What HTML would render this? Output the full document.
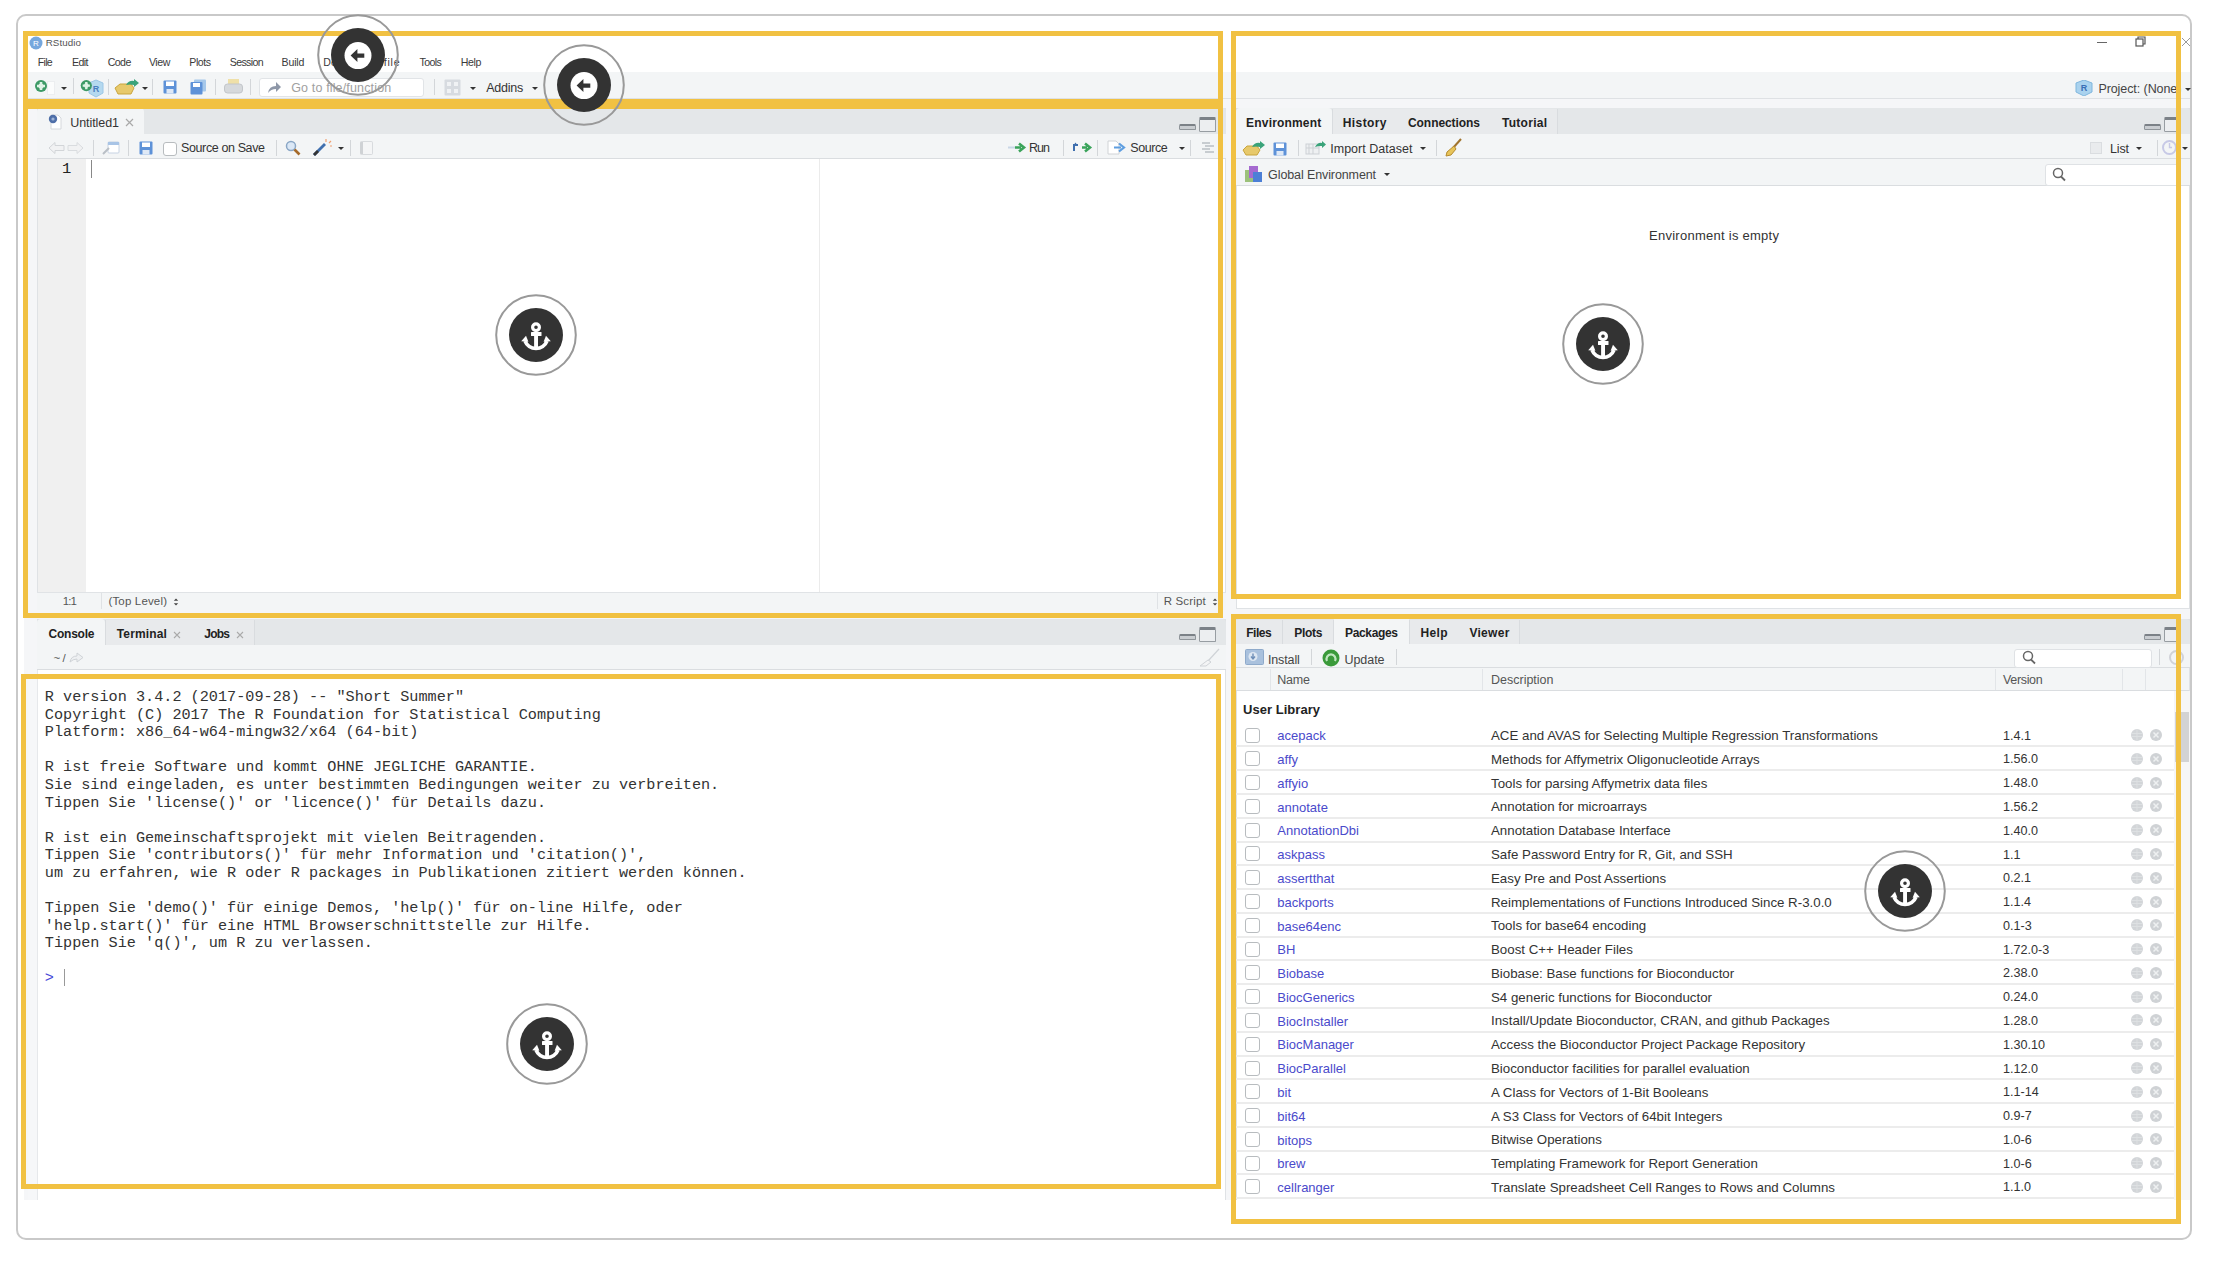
<!DOCTYPE html>
<html><head><meta charset="utf-8">
<style>
html,body{margin:0;padding:0;background:#fff;}
body{width:2218px;height:1262px;position:relative;overflow:hidden;font-family:"Liberation Sans",sans-serif;color:#333;}
.a{position:absolute;}
.t{position:absolute;white-space:pre;line-height:1;}
.y{position:absolute;border:5px solid #f1c142;box-sizing:border-box;}
</style></head><body>
<div class="a" style="left:16px;top:14px;width:2176px;height:1226px;border:2px solid #c9c9c9;border-radius:10px;box-sizing:border-box;"></div>
<svg class="a" style="left:29px;top:36px" width="14" height="14" viewBox="0 0 14 14"><circle cx="7" cy="7" r="6.5" fill="#75a7dd"/><text x="7" y="10" font-size="8" fill="#fff" text-anchor="middle" font-family="Liberation Sans">R</text></svg>
<div class="a" style="left:2097px;top:42px;width:10px;height:1px;background:#666;"></div>
<svg class="a" style="left:2135px;top:36px" width="12" height="11" viewBox="0 0 12 11"><rect x="1" y="3" width="7" height="7" fill="none" stroke="#555" stroke-width="1.2"/><path d="M3 3 V1 H10 V8 H8" fill="none" stroke="#555" stroke-width="1.2"/></svg>
<svg class="a" style="left:2181px;top:37px" width="10" height="10" viewBox="0 0 10 10"><path d="M1 1 L9 9 M9 1 L1 9" stroke="#999" stroke-width="1"/></svg>
<div class="a" style="left:24px;top:72px;width:2166px;height:27px;background:#f3f5f6;border-bottom:1px solid #dee1e4;box-sizing:border-box;"></div>
<div class="a" style="left:24px;top:99px;width:2166px;height:1101px;background:#f5f6f8;"></div>
<div class="a" style="left:47px;top:81px;width:8px;height:14px;background:#fbfcfc;border:1px solid #eceef0;box-sizing:border-box;"></div>
<svg class="a" style="left:33.6px;top:78.6px" width="14" height="14" viewBox="0 0 14 14"><circle cx="7" cy="7" r="6" fill="#3d9a66"/><path d="M7 3 V11 M3 7 H11" stroke="#dff3e6" stroke-width="2.6"/><circle cx="7" cy="7" r="2.6" fill="#dff3e6"/></svg>
<div class="a" style="left:61px;top:87px;width:0;height:0;border-left:3px solid transparent;border-right:3px solid transparent;border-top:3px solid #333;"></div>
<div class="a" style="left:73px;top:78px;width:1px;height:16px;background:#d3d6d9;"></div>
<svg class="a" style="left:80px;top:78px" width="24" height="20" viewBox="0 0 24 20"><path d="M9 5 L16 2 L23 5 V15 L16 19 L9 15 Z" fill="#b5d9ef" stroke="#9cc7e6"/><text x="16" y="14" font-size="9" fill="#4a7fc0" text-anchor="middle" font-family="Liberation Sans" font-weight="bold">R</text><circle cx="6.3" cy="7.6" r="5.6" fill="#3d9a66"/><path d="M6.3 4 V11.2 M2.7 7.6 H9.9" stroke="#dff3e6" stroke-width="2.4"/><circle cx="6.3" cy="7.6" r="2.3" fill="#dff3e6"/></svg>
<div class="a" style="left:108px;top:79px;width:1px;height:16px;background:#d3d6d9;"></div>
<svg class="a" style="left:114px;top:79px" width="26" height="16" viewBox="0 0 26 16"><path d="M1 9 L6 5 H17 L20 9 L17 15 H4 Z" fill="#e7c96b" stroke="#c9a53e"/><path d="M12 6 Q15 1 20 2 V0 L25 4 L20 8 V6 Q16 5 12 6Z" fill="#3aa37a"/></svg>
<div class="a" style="left:142px;top:87px;width:0;height:0;border-left:3px solid transparent;border-right:3px solid transparent;border-top:3px solid #333;"></div>
<div class="a" style="left:152px;top:79px;width:1px;height:16px;background:#d3d6d9;"></div>
<svg class="a" style="left:163px;top:80px" width="14" height="14" viewBox="0 0 14 14"><rect x="0.5" y="0.5" width="13" height="13" rx="1" fill="#5e92d8"/><rect x="3" y="1.5" width="8" height="4.5" fill="#fff"/><rect x="3.5" y="9" width="7" height="4.5" fill="#dfe9f6"/></svg>
<svg class="a" style="left:190px;top:79px" width="17" height="16" viewBox="0 0 17 16"><rect x="4" y="0.5" width="12" height="12" rx="1" fill="#a6c8ea"/><rect x="0.5" y="3" width="12" height="12.5" rx="1" fill="#5e92d8"/><rect x="3" y="4" width="7" height="4" fill="#fff"/></svg>
<div class="a" style="left:215px;top:79px;width:1px;height:16px;background:#d3d6d9;"></div>
<svg class="a" style="left:224px;top:79px" width="19" height="16" viewBox="0 0 19 16"><rect x="4" y="0" width="11" height="6" fill="#efe0a8"/><rect x="0.5" y="5" width="18" height="9" rx="3" fill="#d6d9dc" stroke="#c2c6ca"/></svg>
<div class="a" style="left:250px;top:79px;width:1px;height:16px;background:#d3d6d9;"></div>
<div class="a" style="left:259px;top:78px;width:165px;height:19px;background:#fff;border:1px solid #e1e4e7;border-radius:3px;box-sizing:border-box;"></div>
<svg class="a" style="left:267px;top:81px" width="15" height="13" viewBox="0 0 15 13"><path d="M1 12 Q2 5 9 5 V1 L14 6 L9 11 V8 Q4 8 1 12Z" fill="#8e97a8"/></svg>
<div class="a" style="left:434px;top:79px;width:1px;height:16px;background:#d3d6d9;"></div>
<svg class="a" style="left:444px;top:79px" width="17" height="17" viewBox="0 0 17 17"><rect x="0.5" y="0.5" width="16" height="16" rx="1" fill="#d7dbe0"/><rect x="3" y="3" width="4" height="4" fill="#f0f2f4"/><rect x="10" y="3" width="4" height="4" fill="#f0f2f4"/><rect x="3" y="10" width="4" height="4" fill="#f0f2f4"/><rect x="10" y="10" width="4" height="4" fill="#f0f2f4"/></svg>
<div class="a" style="left:470px;top:87px;width:0;height:0;border-left:3px solid transparent;border-right:3px solid transparent;border-top:3px solid #333;"></div>
<div class="a" style="left:532px;top:87px;width:0;height:0;border-left:3px solid transparent;border-right:3px solid transparent;border-top:3px solid #333;"></div>
<svg class="a" style="left:2075px;top:80px" width="18" height="16" viewBox="0 0 18 16"><path d="M9 0 L17 3 V12 L9 16 L1 12 V3 Z" fill="#a9d2ee" stroke="#7fb6dd"/><text x="9" y="11" font-size="9" fill="#3a6fb5" text-anchor="middle" font-family="Liberation Sans" font-weight="bold">R</text></svg>
<div class="a" style="left:2185px;top:88px;width:0;height:0;border-left:3px solid transparent;border-right:3px solid transparent;border-top:3px solid #333;"></div>
<div class="a" style="left:37px;top:108px;width:1189px;height:502px;background:#fff;border:1px solid #dfe2e5;box-sizing:border-box;"></div>
<div class="a" style="left:37px;top:108px;width:1189px;height:26px;background:#e4e7e9;border-radius:4px 4px 0 0;"></div>
<div class="a" style="left:37px;top:108px;width:107px;height:26px;background:#f3f5f6;border-radius:4px 4px 0 0;"></div>
<svg class="a" style="left:47px;top:113px" width="16" height="17" viewBox="0 0 16 17"><path d="M4 2 H11 L14 5 V16 H4 Z" fill="#fff" stroke="#d5d8db"/><circle cx="6" cy="6" r="4.2" fill="#4f6fa8"/><circle cx="6" cy="6" r="1.6" fill="#9fb5d8"/></svg>
<svg class="a" style="left:125px;top:118px" width="9" height="9" viewBox="0 0 9 9"><path d="M1 1 L8 8 M8 1 L1 8" stroke="#a9a9a9" stroke-width="1.2"/></svg>
<div class="a" style="left:1179px;top:124px;width:17px;height:6px;background:#c9cdd1;border:1px solid #8f959a;border-top:2px solid #7b8187;box-sizing:border-box;border-radius:1.5px;"></div>
<div class="a" style="left:1199px;top:117px;width:17px;height:15px;background:#eceef0;border:1px solid #979da2;border-top:3px solid #7b8187;box-sizing:border-box;border-radius:1.5px;"></div>
<div class="a" style="left:37px;top:134px;width:1189px;height:25px;background:#f3f5f6;border-bottom:1px solid #dadde0;box-sizing:border-box;"></div>
<svg class="a" style="left:48px;top:141px" width="36" height="14" viewBox="0 0 36 14"><path d="M1 7 L7 1.5 V4.5 H16 V9.5 H7 V12.5 Z" fill="#f1f2f3" stroke="#d2d5d8"/><path d="M35 7 L29 1.5 V4.5 H20 V9.5 H29 V12.5 Z" fill="#f1f2f3" stroke="#d9dcdf"/></svg>
<div class="a" style="left:93px;top:140px;width:1px;height:16px;background:#d3d6d9;"></div>
<svg class="a" style="left:102px;top:140px" width="18" height="15" viewBox="0 0 18 15"><rect x="6" y="2" width="11" height="11" rx="1" fill="#fff" stroke="#c7d3e3"/><rect x="6" y="2" width="11" height="3" fill="#a8c4e6"/><path d="M1 14 L7 8" stroke="#b9bfc6" stroke-width="2"/></svg>
<div class="a" style="left:128px;top:140px;width:1px;height:16px;background:#d3d6d9;"></div>
<svg class="a" style="left:139px;top:141px" width="14" height="14" viewBox="0 0 14 14"><rect x="0.5" y="0.5" width="13" height="13" rx="1" fill="#5e92d8"/><rect x="3" y="1.5" width="8" height="4.5" fill="#fff"/><rect x="3.5" y="9" width="7" height="4.5" fill="#dfe9f6"/></svg>
<div class="a" style="left:163px;top:142px;width:14px;height:14px;background:#fff;border:1px solid #b8bcbf;box-sizing:border-box;border-radius:3px;"></div>
<div class="a" style="left:276px;top:140px;width:1px;height:16px;background:#d3d6d9;"></div>
<svg class="a" style="left:285px;top:140px" width="16" height="16" viewBox="0 0 16 16"><circle cx="6" cy="6" r="4.5" fill="#dbe8f6" stroke="#8aa7c6" stroke-width="1.5"/><path d="M9.5 9.5 L14.5 14.5" stroke="#a56a2a" stroke-width="2.6"/></svg>
<svg class="a" style="left:312px;top:138px" width="20" height="19" viewBox="0 0 20 19"><path d="M2 17 L13 6" stroke="#3f6fae" stroke-width="2.8"/><path d="M2 17 L6 13" stroke="#333" stroke-width="2.8"/><path d="M14 1 V4 M17 5 L19 3 M18 8 H20" stroke="#f0a070" stroke-width="1.2"/></svg>
<div class="a" style="left:338px;top:147px;width:0;height:0;border-left:3px solid transparent;border-right:3px solid transparent;border-top:3px solid #333;"></div>
<div class="a" style="left:350px;top:140px;width:1px;height:16px;background:#d3d6d9;"></div>
<div class="a" style="left:360px;top:141px;width:13px;height:14px;background:#f4f5f6;border:1px solid #d8dbde;border-left:3px solid #cfd2d5;box-sizing:border-box;border-radius:2px;"></div>
<svg class="a" style="left:1007px;top:142px" width="20" height="11" viewBox="0 0 20 11"><path d="M1 5.5 H8" stroke="#c9d6e6" stroke-width="2"/><path d="M8 5.5 H14 M12 1.5 L17 5.5 L12 9.5" stroke="#3aa35a" stroke-width="2.6" fill="none"/></svg>
<div class="a" style="left:1063px;top:140px;width:1px;height:16px;background:#d3d6d9;"></div>
<svg class="a" style="left:1072px;top:142px" width="21" height="11" viewBox="0 0 21 11"><path d="M2 9 V3 H6" stroke="#3f6fae" stroke-width="2" fill="none"/><path d="M1 4 L3.5 0.5 L6 4" fill="#3f6fae"/><path d="M10 5.5 H15 M13 1.5 L18 5.5 L13 9.5" stroke="#3aa35a" stroke-width="2.6" fill="none"/></svg>
<div class="a" style="left:1097px;top:140px;width:1px;height:16px;background:#d3d6d9;"></div>
<svg class="a" style="left:1107px;top:140px" width="20" height="15" viewBox="0 0 20 15"><path d="M1 1 H9 L12 4 V14 H1 Z" fill="#fff" stroke="#d0d3d6"/><path d="M7 7.5 H14 M12 3.5 L17 7.5 L12 11.5" stroke="#5e9ee0" stroke-width="2.2" fill="none"/></svg>
<div class="a" style="left:1179px;top:147px;width:0;height:0;border-left:3px solid transparent;border-right:3px solid transparent;border-top:3px solid #333;"></div>
<div class="a" style="left:1190px;top:140px;width:1px;height:16px;background:#d3d6d9;"></div>
<svg class="a" style="left:1201px;top:141px" width="14" height="13" viewBox="0 0 14 13"><path d="M1 2 H9 M4 5 H13 M1 8 H9 M4 11 H13" stroke="#b9bec3" stroke-width="1.6"/></svg>
<div class="a" style="left:38px;top:159px;width:48px;height:433px;background:#f0f0f0;"></div>
<div class="a" style="left:819px;top:159px;width:1px;height:433px;background:#ebebeb;"></div>
<div class="a" style="left:91px;top:160px;width:1px;height:18px;background:#888;"></div>
<div class="a" style="left:37px;top:592px;width:1189px;height:18px;background:#f3f5f6;border-top:1px solid #e0e3e6;box-sizing:border-box;"></div>
<div class="a" style="left:101px;top:593px;width:1px;height:16px;background:#dfe2e5;"></div>
<div class="a" style="left:1157px;top:593px;width:1px;height:16px;background:#dfe2e5;"></div>
<svg class="a" style="left:173px;top:597px" width="6" height="10" viewBox="0 0 6 10"><path d="M0.8 3.8 L3 1.5 L5.2 3.8 Z M0.8 6.2 L3 8.5 L5.2 6.2 Z" fill="#444"/></svg>
<svg class="a" style="left:1212px;top:597px" width="6" height="10" viewBox="0 0 6 10"><path d="M0.8 3.8 L3 1.5 L5.2 3.8 Z M0.8 6.2 L3 8.5 L5.2 6.2 Z" fill="#444"/></svg>
<div class="a" style="left:37px;top:619px;width:1189px;height:581px;background:#fff;border:1px solid #dfe2e5;border-bottom:none;box-sizing:border-box;"></div>
<div class="a" style="left:37px;top:619px;width:1189px;height:26px;background:#e4e7e9;border-radius:4px 4px 0 0;"></div>
<div class="a" style="left:37px;top:619px;width:68px;height:26px;background:#f3f5f6;border-radius:4px 4px 0 0;"></div>
<div class="a" style="left:105px;top:620px;width:87px;height:25px;background:#e8eaec;border-left:1px solid #d9dcdf;border-right:1px solid #d9dcdf;box-sizing:border-box;"></div>
<div class="a" style="left:191px;top:620px;width:64px;height:25px;background:#e8eaec;border-right:1px solid #d9dcdf;box-sizing:border-box;"></div>
<svg class="a" style="left:173px;top:631px" width="8" height="8" viewBox="0 0 8 8"><path d="M1 1 L7 7 M7 1 L1 7" stroke="#aaa" stroke-width="1.1"/></svg>
<svg class="a" style="left:236px;top:631px" width="8" height="8" viewBox="0 0 8 8"><path d="M1 1 L7 7 M7 1 L1 7" stroke="#aaa" stroke-width="1.1"/></svg>
<div class="a" style="left:1179px;top:634px;width:17px;height:6px;background:#c9cdd1;border:1px solid #8f959a;border-top:2px solid #7b8187;box-sizing:border-box;border-radius:1.5px;"></div>
<div class="a" style="left:1199px;top:627px;width:17px;height:15px;background:#eceef0;border:1px solid #979da2;border-top:3px solid #7b8187;box-sizing:border-box;border-radius:1.5px;"></div>
<div class="a" style="left:37px;top:645px;width:1189px;height:25px;background:#f3f5f6;border-bottom:1px solid #dadde0;box-sizing:border-box;"></div>
<svg class="a" style="left:69px;top:652px" width="15" height="11" viewBox="0 0 15 11"><path d="M1 10 Q2 4 8 4 V1 L14 5.5 L8 10 V7 Q4 7 1 10Z" fill="#eef0f2" stroke="#cfd3d7"/></svg>
<svg class="a" style="left:1198px;top:648px" width="22" height="20" viewBox="0 0 22 20"><path d="M21 1 L10 13" stroke="#cfd3d7" stroke-width="1.2"/><path d="M10 12 L2 18 H8 L13 14 Z" fill="#f3f4f5" stroke="#cfd3d7"/></svg>
<div class="a" style="left:28px;top:670px;width:10px;height:530px;background:#f6f7f9;border-right:1px solid #e6e8eb;box-sizing:border-box;"></div>
<div class="a" style="left:64px;top:969px;width:1px;height:17px;background:#999;"></div>
<div class="a" style="left:1236px;top:108px;width:954px;height:501px;background:#fff;border:1px solid #dfe2e5;box-sizing:border-box;"></div>
<div class="a" style="left:1236px;top:108px;width:954px;height:26px;background:#e4e7e9;border-radius:4px 4px 0 0;"></div>
<div class="a" style="left:1236px;top:108px;width:96px;height:26px;background:#f3f5f6;border-radius:4px 4px 0 0;"></div>
<div class="a" style="left:1332px;top:109px;width:66px;height:25px;background:#e8eaec;border-left:1px solid #d9dcdf;border-right:1px solid #d9dcdf;box-sizing:border-box;"></div>
<div class="a" style="left:1397px;top:109px;width:94px;height:25px;background:#e8eaec;border-right:1px solid #d9dcdf;box-sizing:border-box;"></div>
<div class="a" style="left:1490px;top:109px;width:68px;height:25px;background:#e8eaec;border-right:1px solid #d9dcdf;box-sizing:border-box;"></div>
<div class="a" style="left:2144px;top:124px;width:17px;height:6px;background:#c9cdd1;border:1px solid #8f959a;border-top:2px solid #7b8187;box-sizing:border-box;border-radius:1.5px;"></div>
<div class="a" style="left:2164px;top:117px;width:17px;height:15px;background:#eceef0;border:1px solid #979da2;border-top:3px solid #7b8187;box-sizing:border-box;border-radius:1.5px;"></div>
<div class="a" style="left:1236px;top:134px;width:954px;height:25px;background:#f3f5f6;border-bottom:1px solid #dadde0;box-sizing:border-box;"></div>
<svg class="a" style="left:1242px;top:141px" width="24" height="15" viewBox="0 0 24 15"><path d="M1 9 L5 5 H15 L18 9 L15 14 H4 Z" fill="#e7c96b" stroke="#c9a53e"/><path d="M10 6 Q13 1 18 2 V0 L23 4 L18 8 V6 Q14 5 10 6Z" fill="#3aa37a"/></svg>
<svg class="a" style="left:1273px;top:142px" width="14" height="14" viewBox="0 0 14 14"><rect x="0.5" y="0.5" width="13" height="13" rx="1" fill="#5e92d8"/><rect x="3" y="1.5" width="8" height="4.5" fill="#fff"/><rect x="3.5" y="9" width="7" height="4.5" fill="#dfe9f6"/></svg>
<div class="a" style="left:1298px;top:140px;width:1px;height:16px;background:#d3d6d9;"></div>
<svg class="a" style="left:1305px;top:141px" width="22" height="14" viewBox="0 0 22 14"><rect x="1" y="3" width="13" height="10" fill="#eef0f2" stroke="#cdd1d5"/><path d="M4 3 V13 M8 3 V13 M1 7 H14" stroke="#cdd1d5"/><path d="M10 6 Q13 1 17 2 V0 L21 3.5 L17 7 V5 Q14 4.5 10 6Z" fill="#3aa37a"/></svg>
<div class="a" style="left:1420px;top:147px;width:0;height:0;border-left:3px solid transparent;border-right:3px solid transparent;border-top:3px solid #333;"></div>
<div class="a" style="left:1436px;top:140px;width:1px;height:16px;background:#d3d6d9;"></div>
<svg class="a" style="left:1444px;top:138px" width="19" height="19" viewBox="0 0 19 19"><path d="M17 1 L9 10" stroke="#a0742e" stroke-width="2"/><path d="M10 8 L3 14 L2 18 L7 17 L12 11 Z" fill="#e7c45a" stroke="#b58a2e"/></svg>
<div class="a" style="left:2090px;top:142px;width:12px;height:12px;background:#e9ebed;border:1px solid #dadde0;box-sizing:border-box;"></div>
<div class="a" style="left:2136px;top:147px;width:0;height:0;border-left:3px solid transparent;border-right:3px solid transparent;border-top:3px solid #333;"></div>
<div class="a" style="left:2157px;top:140px;width:1px;height:16px;background:#d3d6d9;"></div>
<svg class="a" style="left:2161px;top:139px" width="17" height="17" viewBox="0 0 17 17"><circle cx="8.5" cy="8.5" r="6.5" fill="none" stroke="#c7c9e6" stroke-width="2"/><path d="M8.5 4 V8.5 H11" stroke="#c7c9e6" stroke-width="1.4" fill="none"/></svg>
<div class="a" style="left:2182px;top:147px;width:0;height:0;border-left:3px solid transparent;border-right:3px solid transparent;border-top:3px solid #333;"></div>
<div class="a" style="left:1236px;top:159px;width:954px;height:27px;background:#f3f5f6;border-bottom:1px solid #dadde0;box-sizing:border-box;"></div>
<svg class="a" style="left:1244px;top:165px" width="19" height="18" viewBox="0 0 19 18"><rect x="1" y="5" width="10" height="12" fill="#9cc17a"/><rect x="5" y="1" width="9" height="12" fill="#a56ad0"/><rect x="9" y="7" width="9" height="10" fill="#4c7fd6"/></svg>
<div class="a" style="left:1384px;top:173px;width:0;height:0;border-left:3px solid transparent;border-right:3px solid transparent;border-top:3px solid #333;"></div>
<div class="a" style="left:2045px;top:164px;width:136px;height:22px;background:#fff;border:1px solid #dfe2e5;border-radius:3px;box-sizing:border-box;"></div>
<svg class="a" style="left:2052px;top:167px" width="14" height="15" viewBox="0 0 14 15"><circle cx="6" cy="6" r="4.5" fill="none" stroke="#666" stroke-width="1.5"/><path d="M9 9.5 L13 13.5" stroke="#666" stroke-width="1.8"/></svg>
<div class="a" style="left:1236px;top:619px;width:954px;height:581px;background:#fff;border:1px solid #dfe2e5;border-bottom:none;box-sizing:border-box;"></div>
<div class="a" style="left:1236px;top:619px;width:954px;height:25px;background:#e4e7e9;border-radius:4px 4px 0 0;"></div>
<div class="a" style="left:1236px;top:620px;width:47px;height:24px;background:#e8eaec;border-right:1px solid #d9dcdf;box-sizing:border-box;"></div>
<div class="a" style="left:1283px;top:620px;width:51px;height:24px;background:#e8eaec;border-right:1px solid #d9dcdf;box-sizing:border-box;"></div>
<div class="a" style="left:1334px;top:619px;width:75px;height:25px;background:#f3f5f6;"></div>
<div class="a" style="left:1409px;top:620px;width:49px;height:24px;background:#e8eaec;border-left:1px solid #d9dcdf;border-right:1px solid #d9dcdf;box-sizing:border-box;"></div>
<div class="a" style="left:1457px;top:620px;width:63px;height:24px;background:#e8eaec;border-right:1px solid #d9dcdf;box-sizing:border-box;"></div>
<div class="a" style="left:2144px;top:634px;width:17px;height:6px;background:#c9cdd1;border:1px solid #8f959a;border-top:2px solid #7b8187;box-sizing:border-box;border-radius:1.5px;"></div>
<div class="a" style="left:2164px;top:627px;width:17px;height:15px;background:#eceef0;border:1px solid #979da2;border-top:3px solid #7b8187;box-sizing:border-box;border-radius:1.5px;"></div>
<div class="a" style="left:1236px;top:644px;width:954px;height:24px;background:#f3f5f6;border-bottom:1px solid #dadde0;box-sizing:border-box;"></div>
<svg class="a" style="left:1245px;top:649px" width="19" height="16" viewBox="0 0 19 16"><rect x="0.5" y="0.5" width="18" height="15" rx="1" fill="#a9c1dd" stroke="#8eaacb"/><circle cx="8" cy="7.5" r="4.5" fill="#dde7f2"/><path d="M8 4.5 V9.5 M6 7.5 L8 10 L10 7.5" stroke="#6f8fb8" stroke-width="1.4" fill="none"/></svg>
<div class="a" style="left:1311px;top:649px;width:1px;height:16px;background:#d3d6d9;"></div>
<svg class="a" style="left:1322px;top:649px" width="18" height="18" viewBox="0 0 18 18"><circle cx="9" cy="9" r="8.5" fill="#3a9a3a"/><path d="M5 12 A4.5 4.5 0 1 1 13 12" fill="none" stroke="#bfe6bf" stroke-width="2.2"/></svg>
<div class="a" style="left:1396px;top:649px;width:1px;height:16px;background:#d3d6d9;"></div>
<div class="a" style="left:2014px;top:649px;width:138px;height:19px;background:#fff;border:1px solid #dfe2e5;border-radius:3px;box-sizing:border-box;"></div>
<svg class="a" style="left:2022px;top:650px" width="14" height="15" viewBox="0 0 14 15"><circle cx="6" cy="6" r="4.5" fill="none" stroke="#666" stroke-width="1.5"/><path d="M9 9.5 L13 13.5" stroke="#666" stroke-width="1.8"/></svg>
<div class="a" style="left:2159px;top:649px;width:1px;height:16px;background:#d3d6d9;"></div>
<svg class="a" style="left:2168px;top:649px" width="17" height="17" viewBox="0 0 17 17"><circle cx="8.5" cy="8.5" r="6.5" fill="none" stroke="#d0d2d8" stroke-width="2"/></svg>
<div class="a" style="left:1236px;top:668px;width:953px;height:23px;background:#f3f5f6;border-bottom:1px solid #dadde0;box-sizing:border-box;"></div>
<div class="a" style="left:1270px;top:669px;width:1px;height:21px;background:#e2e5e8;"></div>
<div class="a" style="left:1482px;top:669px;width:1px;height:21px;background:#e2e5e8;"></div>
<div class="a" style="left:1995px;top:669px;width:1px;height:21px;background:#e2e5e8;"></div>
<div class="a" style="left:2122px;top:669px;width:1px;height:21px;background:#e2e5e8;"></div>
<div class="a" style="left:2145px;top:669px;width:1px;height:21px;background:#e2e5e8;"></div>
<div class="a" style="left:2174px;top:691px;width:16px;height:509px;background:#f6f6f6;"></div>
<div class="a" style="left:2175px;top:712px;width:14px;height:50px;background:#d3d3d3;"></div>
<div class="a" style="left:1236px;top:745px;width:938px;height:2px;background:#ececec;"></div>
<div class="a" style="left:1245px;top:728px;width:15px;height:15px;background:#fff;border:1px solid #b8bcbf;box-sizing:border-box;border-radius:3px;"></div>
<svg class="a" style="left:2130px;top:728px" width="14" height="14" viewBox="0 0 14 14"><circle cx="7" cy="7" r="6" fill="#d2d5d8"/><path d="M1.5 5.5 H12.5 M1.5 8.5 H12.5 M7 1 V13" stroke="#dfe2e4" stroke-width="0.8"/></svg>
<svg class="a" style="left:2149px;top:728px" width="14" height="14" viewBox="0 0 14 14"><circle cx="7" cy="7" r="6" fill="#cfd2d5"/><path d="M4.5 4.5 L9.5 9.5 M9.5 4.5 L4.5 9.5" stroke="#eef0f1" stroke-width="1.5"/></svg>
<div class="a" style="left:1236px;top:769px;width:938px;height:2px;background:#ececec;"></div>
<div class="a" style="left:1245px;top:751px;width:15px;height:15px;background:#fff;border:1px solid #b8bcbf;box-sizing:border-box;border-radius:3px;"></div>
<svg class="a" style="left:2130px;top:752px" width="14" height="14" viewBox="0 0 14 14"><circle cx="7" cy="7" r="6" fill="#d2d5d8"/><path d="M1.5 5.5 H12.5 M1.5 8.5 H12.5 M7 1 V13" stroke="#dfe2e4" stroke-width="0.8"/></svg>
<svg class="a" style="left:2149px;top:752px" width="14" height="14" viewBox="0 0 14 14"><circle cx="7" cy="7" r="6" fill="#cfd2d5"/><path d="M4.5 4.5 L9.5 9.5 M9.5 4.5 L4.5 9.5" stroke="#eef0f1" stroke-width="1.5"/></svg>
<div class="a" style="left:1236px;top:793px;width:938px;height:2px;background:#ececec;"></div>
<div class="a" style="left:1245px;top:775px;width:15px;height:15px;background:#fff;border:1px solid #b8bcbf;box-sizing:border-box;border-radius:3px;"></div>
<svg class="a" style="left:2130px;top:776px" width="14" height="14" viewBox="0 0 14 14"><circle cx="7" cy="7" r="6" fill="#d2d5d8"/><path d="M1.5 5.5 H12.5 M1.5 8.5 H12.5 M7 1 V13" stroke="#dfe2e4" stroke-width="0.8"/></svg>
<svg class="a" style="left:2149px;top:776px" width="14" height="14" viewBox="0 0 14 14"><circle cx="7" cy="7" r="6" fill="#cfd2d5"/><path d="M4.5 4.5 L9.5 9.5 M9.5 4.5 L4.5 9.5" stroke="#eef0f1" stroke-width="1.5"/></svg>
<div class="a" style="left:1236px;top:817px;width:938px;height:2px;background:#ececec;"></div>
<div class="a" style="left:1245px;top:799px;width:15px;height:15px;background:#fff;border:1px solid #b8bcbf;box-sizing:border-box;border-radius:3px;"></div>
<svg class="a" style="left:2130px;top:799px" width="14" height="14" viewBox="0 0 14 14"><circle cx="7" cy="7" r="6" fill="#d2d5d8"/><path d="M1.5 5.5 H12.5 M1.5 8.5 H12.5 M7 1 V13" stroke="#dfe2e4" stroke-width="0.8"/></svg>
<svg class="a" style="left:2149px;top:799px" width="14" height="14" viewBox="0 0 14 14"><circle cx="7" cy="7" r="6" fill="#cfd2d5"/><path d="M4.5 4.5 L9.5 9.5 M9.5 4.5 L4.5 9.5" stroke="#eef0f1" stroke-width="1.5"/></svg>
<div class="a" style="left:1236px;top:841px;width:938px;height:2px;background:#ececec;"></div>
<div class="a" style="left:1245px;top:823px;width:15px;height:15px;background:#fff;border:1px solid #b8bcbf;box-sizing:border-box;border-radius:3px;"></div>
<svg class="a" style="left:2130px;top:823px" width="14" height="14" viewBox="0 0 14 14"><circle cx="7" cy="7" r="6" fill="#d2d5d8"/><path d="M1.5 5.5 H12.5 M1.5 8.5 H12.5 M7 1 V13" stroke="#dfe2e4" stroke-width="0.8"/></svg>
<svg class="a" style="left:2149px;top:823px" width="14" height="14" viewBox="0 0 14 14"><circle cx="7" cy="7" r="6" fill="#cfd2d5"/><path d="M4.5 4.5 L9.5 9.5 M9.5 4.5 L4.5 9.5" stroke="#eef0f1" stroke-width="1.5"/></svg>
<div class="a" style="left:1236px;top:864px;width:938px;height:2px;background:#ececec;"></div>
<div class="a" style="left:1245px;top:846px;width:15px;height:15px;background:#fff;border:1px solid #b8bcbf;box-sizing:border-box;border-radius:3px;"></div>
<svg class="a" style="left:2130px;top:847px" width="14" height="14" viewBox="0 0 14 14"><circle cx="7" cy="7" r="6" fill="#d2d5d8"/><path d="M1.5 5.5 H12.5 M1.5 8.5 H12.5 M7 1 V13" stroke="#dfe2e4" stroke-width="0.8"/></svg>
<svg class="a" style="left:2149px;top:847px" width="14" height="14" viewBox="0 0 14 14"><circle cx="7" cy="7" r="6" fill="#cfd2d5"/><path d="M4.5 4.5 L9.5 9.5 M9.5 4.5 L4.5 9.5" stroke="#eef0f1" stroke-width="1.5"/></svg>
<div class="a" style="left:1236px;top:888px;width:938px;height:2px;background:#ececec;"></div>
<div class="a" style="left:1245px;top:870px;width:15px;height:15px;background:#fff;border:1px solid #b8bcbf;box-sizing:border-box;border-radius:3px;"></div>
<svg class="a" style="left:2130px;top:871px" width="14" height="14" viewBox="0 0 14 14"><circle cx="7" cy="7" r="6" fill="#d2d5d8"/><path d="M1.5 5.5 H12.5 M1.5 8.5 H12.5 M7 1 V13" stroke="#dfe2e4" stroke-width="0.8"/></svg>
<svg class="a" style="left:2149px;top:871px" width="14" height="14" viewBox="0 0 14 14"><circle cx="7" cy="7" r="6" fill="#cfd2d5"/><path d="M4.5 4.5 L9.5 9.5 M9.5 4.5 L4.5 9.5" stroke="#eef0f1" stroke-width="1.5"/></svg>
<div class="a" style="left:1236px;top:912px;width:938px;height:2px;background:#ececec;"></div>
<div class="a" style="left:1245px;top:894px;width:15px;height:15px;background:#fff;border:1px solid #b8bcbf;box-sizing:border-box;border-radius:3px;"></div>
<svg class="a" style="left:2130px;top:895px" width="14" height="14" viewBox="0 0 14 14"><circle cx="7" cy="7" r="6" fill="#d2d5d8"/><path d="M1.5 5.5 H12.5 M1.5 8.5 H12.5 M7 1 V13" stroke="#dfe2e4" stroke-width="0.8"/></svg>
<svg class="a" style="left:2149px;top:895px" width="14" height="14" viewBox="0 0 14 14"><circle cx="7" cy="7" r="6" fill="#cfd2d5"/><path d="M4.5 4.5 L9.5 9.5 M9.5 4.5 L4.5 9.5" stroke="#eef0f1" stroke-width="1.5"/></svg>
<div class="a" style="left:1236px;top:936px;width:938px;height:2px;background:#ececec;"></div>
<div class="a" style="left:1245px;top:918px;width:15px;height:15px;background:#fff;border:1px solid #b8bcbf;box-sizing:border-box;border-radius:3px;"></div>
<svg class="a" style="left:2130px;top:918px" width="14" height="14" viewBox="0 0 14 14"><circle cx="7" cy="7" r="6" fill="#d2d5d8"/><path d="M1.5 5.5 H12.5 M1.5 8.5 H12.5 M7 1 V13" stroke="#dfe2e4" stroke-width="0.8"/></svg>
<svg class="a" style="left:2149px;top:918px" width="14" height="14" viewBox="0 0 14 14"><circle cx="7" cy="7" r="6" fill="#cfd2d5"/><path d="M4.5 4.5 L9.5 9.5 M9.5 4.5 L4.5 9.5" stroke="#eef0f1" stroke-width="1.5"/></svg>
<div class="a" style="left:1236px;top:959px;width:938px;height:2px;background:#ececec;"></div>
<div class="a" style="left:1245px;top:942px;width:15px;height:15px;background:#fff;border:1px solid #b8bcbf;box-sizing:border-box;border-radius:3px;"></div>
<svg class="a" style="left:2130px;top:942px" width="14" height="14" viewBox="0 0 14 14"><circle cx="7" cy="7" r="6" fill="#d2d5d8"/><path d="M1.5 5.5 H12.5 M1.5 8.5 H12.5 M7 1 V13" stroke="#dfe2e4" stroke-width="0.8"/></svg>
<svg class="a" style="left:2149px;top:942px" width="14" height="14" viewBox="0 0 14 14"><circle cx="7" cy="7" r="6" fill="#cfd2d5"/><path d="M4.5 4.5 L9.5 9.5 M9.5 4.5 L4.5 9.5" stroke="#eef0f1" stroke-width="1.5"/></svg>
<div class="a" style="left:1236px;top:983px;width:938px;height:2px;background:#ececec;"></div>
<div class="a" style="left:1245px;top:965px;width:15px;height:15px;background:#fff;border:1px solid #b8bcbf;box-sizing:border-box;border-radius:3px;"></div>
<svg class="a" style="left:2130px;top:966px" width="14" height="14" viewBox="0 0 14 14"><circle cx="7" cy="7" r="6" fill="#d2d5d8"/><path d="M1.5 5.5 H12.5 M1.5 8.5 H12.5 M7 1 V13" stroke="#dfe2e4" stroke-width="0.8"/></svg>
<svg class="a" style="left:2149px;top:966px" width="14" height="14" viewBox="0 0 14 14"><circle cx="7" cy="7" r="6" fill="#cfd2d5"/><path d="M4.5 4.5 L9.5 9.5 M9.5 4.5 L4.5 9.5" stroke="#eef0f1" stroke-width="1.5"/></svg>
<div class="a" style="left:1236px;top:1007px;width:938px;height:2px;background:#ececec;"></div>
<div class="a" style="left:1245px;top:989px;width:15px;height:15px;background:#fff;border:1px solid #b8bcbf;box-sizing:border-box;border-radius:3px;"></div>
<svg class="a" style="left:2130px;top:990px" width="14" height="14" viewBox="0 0 14 14"><circle cx="7" cy="7" r="6" fill="#d2d5d8"/><path d="M1.5 5.5 H12.5 M1.5 8.5 H12.5 M7 1 V13" stroke="#dfe2e4" stroke-width="0.8"/></svg>
<svg class="a" style="left:2149px;top:990px" width="14" height="14" viewBox="0 0 14 14"><circle cx="7" cy="7" r="6" fill="#cfd2d5"/><path d="M4.5 4.5 L9.5 9.5 M9.5 4.5 L4.5 9.5" stroke="#eef0f1" stroke-width="1.5"/></svg>
<div class="a" style="left:1236px;top:1031px;width:938px;height:2px;background:#ececec;"></div>
<div class="a" style="left:1245px;top:1013px;width:15px;height:15px;background:#fff;border:1px solid #b8bcbf;box-sizing:border-box;border-radius:3px;"></div>
<svg class="a" style="left:2130px;top:1013px" width="14" height="14" viewBox="0 0 14 14"><circle cx="7" cy="7" r="6" fill="#d2d5d8"/><path d="M1.5 5.5 H12.5 M1.5 8.5 H12.5 M7 1 V13" stroke="#dfe2e4" stroke-width="0.8"/></svg>
<svg class="a" style="left:2149px;top:1013px" width="14" height="14" viewBox="0 0 14 14"><circle cx="7" cy="7" r="6" fill="#cfd2d5"/><path d="M4.5 4.5 L9.5 9.5 M9.5 4.5 L4.5 9.5" stroke="#eef0f1" stroke-width="1.5"/></svg>
<div class="a" style="left:1236px;top:1055px;width:938px;height:2px;background:#ececec;"></div>
<div class="a" style="left:1245px;top:1037px;width:15px;height:15px;background:#fff;border:1px solid #b8bcbf;box-sizing:border-box;border-radius:3px;"></div>
<svg class="a" style="left:2130px;top:1037px" width="14" height="14" viewBox="0 0 14 14"><circle cx="7" cy="7" r="6" fill="#d2d5d8"/><path d="M1.5 5.5 H12.5 M1.5 8.5 H12.5 M7 1 V13" stroke="#dfe2e4" stroke-width="0.8"/></svg>
<svg class="a" style="left:2149px;top:1037px" width="14" height="14" viewBox="0 0 14 14"><circle cx="7" cy="7" r="6" fill="#cfd2d5"/><path d="M4.5 4.5 L9.5 9.5 M9.5 4.5 L4.5 9.5" stroke="#eef0f1" stroke-width="1.5"/></svg>
<div class="a" style="left:1236px;top:1078px;width:938px;height:2px;background:#ececec;"></div>
<div class="a" style="left:1245px;top:1061px;width:15px;height:15px;background:#fff;border:1px solid #b8bcbf;box-sizing:border-box;border-radius:3px;"></div>
<svg class="a" style="left:2130px;top:1061px" width="14" height="14" viewBox="0 0 14 14"><circle cx="7" cy="7" r="6" fill="#d2d5d8"/><path d="M1.5 5.5 H12.5 M1.5 8.5 H12.5 M7 1 V13" stroke="#dfe2e4" stroke-width="0.8"/></svg>
<svg class="a" style="left:2149px;top:1061px" width="14" height="14" viewBox="0 0 14 14"><circle cx="7" cy="7" r="6" fill="#cfd2d5"/><path d="M4.5 4.5 L9.5 9.5 M9.5 4.5 L4.5 9.5" stroke="#eef0f1" stroke-width="1.5"/></svg>
<div class="a" style="left:1236px;top:1102px;width:938px;height:2px;background:#ececec;"></div>
<div class="a" style="left:1245px;top:1084px;width:15px;height:15px;background:#fff;border:1px solid #b8bcbf;box-sizing:border-box;border-radius:3px;"></div>
<svg class="a" style="left:2130px;top:1085px" width="14" height="14" viewBox="0 0 14 14"><circle cx="7" cy="7" r="6" fill="#d2d5d8"/><path d="M1.5 5.5 H12.5 M1.5 8.5 H12.5 M7 1 V13" stroke="#dfe2e4" stroke-width="0.8"/></svg>
<svg class="a" style="left:2149px;top:1085px" width="14" height="14" viewBox="0 0 14 14"><circle cx="7" cy="7" r="6" fill="#cfd2d5"/><path d="M4.5 4.5 L9.5 9.5 M9.5 4.5 L4.5 9.5" stroke="#eef0f1" stroke-width="1.5"/></svg>
<div class="a" style="left:1236px;top:1126px;width:938px;height:2px;background:#ececec;"></div>
<div class="a" style="left:1245px;top:1108px;width:15px;height:15px;background:#fff;border:1px solid #b8bcbf;box-sizing:border-box;border-radius:3px;"></div>
<svg class="a" style="left:2130px;top:1109px" width="14" height="14" viewBox="0 0 14 14"><circle cx="7" cy="7" r="6" fill="#d2d5d8"/><path d="M1.5 5.5 H12.5 M1.5 8.5 H12.5 M7 1 V13" stroke="#dfe2e4" stroke-width="0.8"/></svg>
<svg class="a" style="left:2149px;top:1109px" width="14" height="14" viewBox="0 0 14 14"><circle cx="7" cy="7" r="6" fill="#cfd2d5"/><path d="M4.5 4.5 L9.5 9.5 M9.5 4.5 L4.5 9.5" stroke="#eef0f1" stroke-width="1.5"/></svg>
<div class="a" style="left:1236px;top:1150px;width:938px;height:2px;background:#ececec;"></div>
<div class="a" style="left:1245px;top:1132px;width:15px;height:15px;background:#fff;border:1px solid #b8bcbf;box-sizing:border-box;border-radius:3px;"></div>
<svg class="a" style="left:2130px;top:1132px" width="14" height="14" viewBox="0 0 14 14"><circle cx="7" cy="7" r="6" fill="#d2d5d8"/><path d="M1.5 5.5 H12.5 M1.5 8.5 H12.5 M7 1 V13" stroke="#dfe2e4" stroke-width="0.8"/></svg>
<svg class="a" style="left:2149px;top:1132px" width="14" height="14" viewBox="0 0 14 14"><circle cx="7" cy="7" r="6" fill="#cfd2d5"/><path d="M4.5 4.5 L9.5 9.5 M9.5 4.5 L4.5 9.5" stroke="#eef0f1" stroke-width="1.5"/></svg>
<div class="a" style="left:1236px;top:1173px;width:938px;height:2px;background:#ececec;"></div>
<div class="a" style="left:1245px;top:1156px;width:15px;height:15px;background:#fff;border:1px solid #b8bcbf;box-sizing:border-box;border-radius:3px;"></div>
<svg class="a" style="left:2130px;top:1156px" width="14" height="14" viewBox="0 0 14 14"><circle cx="7" cy="7" r="6" fill="#d2d5d8"/><path d="M1.5 5.5 H12.5 M1.5 8.5 H12.5 M7 1 V13" stroke="#dfe2e4" stroke-width="0.8"/></svg>
<svg class="a" style="left:2149px;top:1156px" width="14" height="14" viewBox="0 0 14 14"><circle cx="7" cy="7" r="6" fill="#cfd2d5"/><path d="M4.5 4.5 L9.5 9.5 M9.5 4.5 L4.5 9.5" stroke="#eef0f1" stroke-width="1.5"/></svg>
<div class="a" style="left:1236px;top:1197px;width:938px;height:2px;background:#ececec;"></div>
<div class="a" style="left:1245px;top:1179px;width:15px;height:15px;background:#fff;border:1px solid #b8bcbf;box-sizing:border-box;border-radius:3px;"></div>
<svg class="a" style="left:2130px;top:1180px" width="14" height="14" viewBox="0 0 14 14"><circle cx="7" cy="7" r="6" fill="#d2d5d8"/><path d="M1.5 5.5 H12.5 M1.5 8.5 H12.5 M7 1 V13" stroke="#dfe2e4" stroke-width="0.8"/></svg>
<svg class="a" style="left:2149px;top:1180px" width="14" height="14" viewBox="0 0 14 14"><circle cx="7" cy="7" r="6" fill="#cfd2d5"/><path d="M4.5 4.5 L9.5 9.5 M9.5 4.5 L4.5 9.5" stroke="#eef0f1" stroke-width="1.5"/></svg>
<div class="t" style="left:45.7px;top:38.10px;font-size:9.8px;font-family:'Liberation Sans';font-weight:400;color:#555;letter-spacing:0.057px;">RStudio</div>
<div class="t" style="left:37.8px;top:56.73px;font-size:10.6px;font-family:'Liberation Sans';font-weight:400;color:#3a3a3a;letter-spacing:-0.726px;">File</div>
<div class="t" style="left:72.1px;top:56.73px;font-size:10.6px;font-family:'Liberation Sans';font-weight:400;color:#3a3a3a;letter-spacing:-0.622px;">Edit</div>
<div class="t" style="left:107.8px;top:56.73px;font-size:10.6px;font-family:'Liberation Sans';font-weight:400;color:#3a3a3a;letter-spacing:-0.609px;">Code</div>
<div class="t" style="left:148.9px;top:56.73px;font-size:10.6px;font-family:'Liberation Sans';font-weight:400;color:#3a3a3a;letter-spacing:-0.394px;">View</div>
<div class="t" style="left:189.3px;top:56.73px;font-size:10.6px;font-family:'Liberation Sans';font-weight:400;color:#3a3a3a;letter-spacing:-0.466px;">Plots</div>
<div class="t" style="left:229.7px;top:56.73px;font-size:10.6px;font-family:'Liberation Sans';font-weight:400;color:#3a3a3a;letter-spacing:-0.617px;">Session</div>
<div class="t" style="left:281.6px;top:56.73px;font-size:10.6px;font-family:'Liberation Sans';font-weight:400;color:#3a3a3a;letter-spacing:-0.191px;">Build</div>
<div class="t" style="left:323.3px;top:56.73px;font-size:10.6px;font-family:'Liberation Sans';font-weight:400;color:#3a3a3a;letter-spacing:0.120px;">Debug</div>
<div class="t" style="left:365.0px;top:56.73px;font-size:10.6px;font-family:'Liberation Sans';font-weight:400;color:#3a3a3a;letter-spacing:0.761px;">Profile</div>
<div class="t" style="left:419.6px;top:56.73px;font-size:10.6px;font-family:'Liberation Sans';font-weight:400;color:#3a3a3a;letter-spacing:-0.634px;">Tools</div>
<div class="t" style="left:460.8px;top:56.73px;font-size:10.6px;font-family:'Liberation Sans';font-weight:400;color:#3a3a3a;letter-spacing:-0.432px;">Help</div>
<div class="t" style="left:291.2px;top:82.42px;font-size:12.5px;font-family:'Liberation Sans';font-weight:400;color:#a0a0a0;letter-spacing:0.151px;">Go to file/function</div>
<div class="t" style="left:486.2px;top:82.42px;font-size:12.5px;font-family:'Liberation Sans';font-weight:400;color:#333;letter-spacing:-0.247px;">Addins</div>
<div class="t" style="left:2098.4px;top:82.92px;font-size:12.5px;font-family:'Liberation Sans';font-weight:400;color:#444;letter-spacing:-0.076px;">Project: (None)</div>
<div class="t" style="left:70.3px;top:116.72px;font-size:12.5px;font-family:'Liberation Sans';font-weight:400;color:#333;letter-spacing:-0.080px;">Untitled1</div>
<div class="t" style="left:181.0px;top:142.32px;font-size:12.5px;font-family:'Liberation Sans';font-weight:400;color:#333;letter-spacing:-0.381px;">Source on Save</div>
<div class="t" style="left:1029.0px;top:142.32px;font-size:12.5px;font-family:'Liberation Sans';font-weight:400;color:#333;letter-spacing:-0.969px;">Run</div>
<div class="t" style="left:1130.3px;top:142.32px;font-size:12.5px;font-family:'Liberation Sans';font-weight:400;color:#333;letter-spacing:-0.422px;">Source</div>
<div class="t" style="left:62.0px;top:161.92px;font-size:15.5px;font-family:'Liberation Mono';font-weight:400;color:#222;letter-spacing:0.000px;">1</div>
<div class="t" style="left:62.8px;top:596.27px;font-size:11.5px;font-family:'Liberation Sans';font-weight:400;color:#555;letter-spacing:-1.000px;">1:1</div>
<div class="t" style="left:108.4px;top:596.27px;font-size:11.5px;font-family:'Liberation Sans';font-weight:400;color:#555;letter-spacing:0.171px;">(Top Level)</div>
<div class="t" style="left:1163.7px;top:596.27px;font-size:11.5px;font-family:'Liberation Sans';font-weight:400;color:#555;letter-spacing:0.156px;">R Script</div>
<div class="t" style="left:48.5px;top:627.84px;font-size:12px;font-family:'Liberation Sans';font-weight:700;color:#222;letter-spacing:-0.224px;">Console</div>
<div class="t" style="left:116.8px;top:627.84px;font-size:12px;font-family:'Liberation Sans';font-weight:700;color:#222;letter-spacing:0.125px;">Terminal</div>
<div class="t" style="left:204.3px;top:627.84px;font-size:12px;font-family:'Liberation Sans';font-weight:700;color:#222;letter-spacing:-0.772px;">Jobs</div>
<div class="t" style="left:53.4px;top:652.77px;font-size:11.5px;font-family:'Liberation Sans';font-weight:400;color:#555;letter-spacing:2.478px;">~/</div>
<div class="t" style="left:44.8px;top:690.15px;font-size:15.2px;font-family:'Liberation Mono';font-weight:400;color:#333;letter-spacing:0.000px;">R version 3.4.2 (2017-09-28) -- "Short Summer"</div>
<div class="t" style="left:44.8px;top:707.72px;font-size:15.2px;font-family:'Liberation Mono';font-weight:400;color:#333;letter-spacing:0.000px;">Copyright (C) 2017 The R Foundation for Statistical Computing</div>
<div class="t" style="left:44.8px;top:725.29px;font-size:15.2px;font-family:'Liberation Mono';font-weight:400;color:#333;letter-spacing:0.000px;">Platform: x86_64-w64-mingw32/x64 (64-bit)</div>
<div class="t" style="left:44.8px;top:760.43px;font-size:15.2px;font-family:'Liberation Mono';font-weight:400;color:#333;letter-spacing:0.000px;">R ist freie Software und kommt OHNE JEGLICHE GARANTIE.</div>
<div class="t" style="left:44.8px;top:778.00px;font-size:15.2px;font-family:'Liberation Mono';font-weight:400;color:#333;letter-spacing:0.000px;">Sie sind eingeladen, es unter bestimmten Bedingungen weiter zu verbreiten.</div>
<div class="t" style="left:44.8px;top:795.57px;font-size:15.2px;font-family:'Liberation Mono';font-weight:400;color:#333;letter-spacing:0.000px;">Tippen Sie 'license()' or 'licence()' für Details dazu.</div>
<div class="t" style="left:44.8px;top:830.71px;font-size:15.2px;font-family:'Liberation Mono';font-weight:400;color:#333;letter-spacing:0.000px;">R ist ein Gemeinschaftsprojekt mit vielen Beitragenden.</div>
<div class="t" style="left:44.8px;top:848.28px;font-size:15.2px;font-family:'Liberation Mono';font-weight:400;color:#333;letter-spacing:0.000px;">Tippen Sie 'contributors()' für mehr Information und 'citation()',</div>
<div class="t" style="left:44.8px;top:865.85px;font-size:15.2px;font-family:'Liberation Mono';font-weight:400;color:#333;letter-spacing:0.000px;">um zu erfahren, wie R oder R packages in Publikationen zitiert werden können.</div>
<div class="t" style="left:44.8px;top:900.99px;font-size:15.2px;font-family:'Liberation Mono';font-weight:400;color:#333;letter-spacing:0.000px;">Tippen Sie 'demo()' für einige Demos, 'help()' für on-line Hilfe, oder</div>
<div class="t" style="left:44.8px;top:918.56px;font-size:15.2px;font-family:'Liberation Mono';font-weight:400;color:#333;letter-spacing:0.000px;">'help.start()' für eine HTML Browserschnittstelle zur Hilfe.</div>
<div class="t" style="left:44.8px;top:936.13px;font-size:15.2px;font-family:'Liberation Mono';font-weight:400;color:#333;letter-spacing:0.000px;">Tippen Sie 'q()', um R zu verlassen.</div>
<div class="t" style="left:44.8px;top:971.27px;font-size:15.2px;font-family:'Liberation Mono';font-weight:400;color:#4848d8;letter-spacing:0.000px;">></div>
<div class="t" style="left:1246.1px;top:117.14px;font-size:12px;font-family:'Liberation Sans';font-weight:700;color:#222;letter-spacing:0.176px;">Environment</div>
<div class="t" style="left:1342.8px;top:117.14px;font-size:12px;font-family:'Liberation Sans';font-weight:700;color:#222;letter-spacing:0.393px;">History</div>
<div class="t" style="left:1408.0px;top:117.14px;font-size:12px;font-family:'Liberation Sans';font-weight:700;color:#222;letter-spacing:-0.067px;">Connections</div>
<div class="t" style="left:1502.0px;top:117.14px;font-size:12px;font-family:'Liberation Sans';font-weight:700;color:#222;letter-spacing:0.284px;">Tutorial</div>
<div class="t" style="left:1330.2px;top:143.22px;font-size:12.5px;font-family:'Liberation Sans';font-weight:400;color:#333;letter-spacing:0.032px;">Import Dataset</div>
<div class="t" style="left:2110.0px;top:143.22px;font-size:12.5px;font-family:'Liberation Sans';font-weight:400;color:#333;letter-spacing:-0.151px;">List</div>
<div class="t" style="left:1268.1px;top:169.42px;font-size:12.5px;font-family:'Liberation Sans';font-weight:400;color:#444;letter-spacing:-0.105px;">Global Environment</div>
<div class="t" style="left:1649.0px;top:229.20px;font-size:13px;font-family:'Liberation Sans';font-weight:400;color:#333;letter-spacing:0.263px;">Environment is empty</div>
<div class="t" style="left:1246.2px;top:627.34px;font-size:12px;font-family:'Liberation Sans';font-weight:700;color:#222;letter-spacing:-0.465px;">Files</div>
<div class="t" style="left:1294.2px;top:627.34px;font-size:12px;font-family:'Liberation Sans';font-weight:700;color:#222;letter-spacing:-0.286px;">Plots</div>
<div class="t" style="left:1345.0px;top:627.34px;font-size:12px;font-family:'Liberation Sans';font-weight:700;color:#222;letter-spacing:-0.342px;">Packages</div>
<div class="t" style="left:1420.5px;top:627.34px;font-size:12px;font-family:'Liberation Sans';font-weight:700;color:#222;letter-spacing:0.328px;">Help</div>
<div class="t" style="left:1469.4px;top:627.34px;font-size:12px;font-family:'Liberation Sans';font-weight:700;color:#222;letter-spacing:0.303px;">Viewer</div>
<div class="t" style="left:1267.9px;top:653.52px;font-size:12.5px;font-family:'Liberation Sans';font-weight:400;color:#444;letter-spacing:-0.109px;">Install</div>
<div class="t" style="left:1344.5px;top:653.52px;font-size:12.5px;font-family:'Liberation Sans';font-weight:400;color:#444;letter-spacing:-0.062px;">Update</div>
<div class="t" style="left:1277.3px;top:673.82px;font-size:12.5px;font-family:'Liberation Sans';font-weight:400;color:#555;letter-spacing:-0.215px;">Name</div>
<div class="t" style="left:1491.0px;top:673.82px;font-size:12.5px;font-family:'Liberation Sans';font-weight:400;color:#555;letter-spacing:-0.003px;">Description</div>
<div class="t" style="left:2003.1px;top:673.82px;font-size:12.5px;font-family:'Liberation Sans';font-weight:400;color:#555;letter-spacing:-0.367px;">Version</div>
<div class="t" style="left:1243.0px;top:702.70px;font-size:13px;font-family:'Liberation Sans';font-weight:700;color:#222;letter-spacing:0.037px;">User Library</div>
<div class="t" style="left:1277.3px;top:729.30px;font-size:13px;font-family:'Liberation Sans';font-weight:400;color:#4a4acb;letter-spacing:0.000px;">acepack</div>
<div class="t" style="left:1491.0px;top:729.04px;font-size:13.3px;font-family:'Liberation Sans';font-weight:400;color:#333;letter-spacing:0.000px;">ACE and AVAS for Selecting Multiple Regression Transformations</div>
<div class="t" style="left:2003.1px;top:729.63px;font-size:12.6px;font-family:'Liberation Sans';font-weight:400;color:#333;letter-spacing:0.000px;">1.4.1</div>
<div class="t" style="left:1277.3px;top:753.08px;font-size:13px;font-family:'Liberation Sans';font-weight:400;color:#4a4acb;letter-spacing:0.000px;">affy</div>
<div class="t" style="left:1491.0px;top:752.82px;font-size:13.3px;font-family:'Liberation Sans';font-weight:400;color:#333;letter-spacing:0.000px;">Methods for Affymetrix Oligonucleotide Arrays</div>
<div class="t" style="left:2003.1px;top:753.41px;font-size:12.6px;font-family:'Liberation Sans';font-weight:400;color:#333;letter-spacing:0.000px;">1.56.0</div>
<div class="t" style="left:1277.3px;top:776.86px;font-size:13px;font-family:'Liberation Sans';font-weight:400;color:#4a4acb;letter-spacing:0.000px;">affyio</div>
<div class="t" style="left:1491.0px;top:776.60px;font-size:13.3px;font-family:'Liberation Sans';font-weight:400;color:#333;letter-spacing:0.000px;">Tools for parsing Affymetrix data files</div>
<div class="t" style="left:2003.1px;top:777.19px;font-size:12.6px;font-family:'Liberation Sans';font-weight:400;color:#333;letter-spacing:0.000px;">1.48.0</div>
<div class="t" style="left:1277.3px;top:800.64px;font-size:13px;font-family:'Liberation Sans';font-weight:400;color:#4a4acb;letter-spacing:0.000px;">annotate</div>
<div class="t" style="left:1491.0px;top:800.38px;font-size:13.3px;font-family:'Liberation Sans';font-weight:400;color:#333;letter-spacing:0.000px;">Annotation for microarrays</div>
<div class="t" style="left:2003.1px;top:800.97px;font-size:12.6px;font-family:'Liberation Sans';font-weight:400;color:#333;letter-spacing:0.000px;">1.56.2</div>
<div class="t" style="left:1277.3px;top:824.42px;font-size:13px;font-family:'Liberation Sans';font-weight:400;color:#4a4acb;letter-spacing:0.000px;">AnnotationDbi</div>
<div class="t" style="left:1491.0px;top:824.16px;font-size:13.3px;font-family:'Liberation Sans';font-weight:400;color:#333;letter-spacing:0.000px;">Annotation Database Interface</div>
<div class="t" style="left:2003.1px;top:824.75px;font-size:12.6px;font-family:'Liberation Sans';font-weight:400;color:#333;letter-spacing:0.000px;">1.40.0</div>
<div class="t" style="left:1277.3px;top:848.20px;font-size:13px;font-family:'Liberation Sans';font-weight:400;color:#4a4acb;letter-spacing:0.000px;">askpass</div>
<div class="t" style="left:1491.0px;top:847.94px;font-size:13.3px;font-family:'Liberation Sans';font-weight:400;color:#333;letter-spacing:0.000px;">Safe Password Entry for R, Git, and SSH</div>
<div class="t" style="left:2003.1px;top:848.53px;font-size:12.6px;font-family:'Liberation Sans';font-weight:400;color:#333;letter-spacing:0.000px;">1.1</div>
<div class="t" style="left:1277.3px;top:871.98px;font-size:13px;font-family:'Liberation Sans';font-weight:400;color:#4a4acb;letter-spacing:0.000px;">assertthat</div>
<div class="t" style="left:1491.0px;top:871.72px;font-size:13.3px;font-family:'Liberation Sans';font-weight:400;color:#333;letter-spacing:0.000px;">Easy Pre and Post Assertions</div>
<div class="t" style="left:2003.1px;top:872.31px;font-size:12.6px;font-family:'Liberation Sans';font-weight:400;color:#333;letter-spacing:0.000px;">0.2.1</div>
<div class="t" style="left:1277.3px;top:895.76px;font-size:13px;font-family:'Liberation Sans';font-weight:400;color:#4a4acb;letter-spacing:0.000px;">backports</div>
<div class="t" style="left:1491.0px;top:895.50px;font-size:13.3px;font-family:'Liberation Sans';font-weight:400;color:#333;letter-spacing:0.000px;">Reimplementations of Functions Introduced Since R-3.0.0</div>
<div class="t" style="left:2003.1px;top:896.09px;font-size:12.6px;font-family:'Liberation Sans';font-weight:400;color:#333;letter-spacing:0.000px;">1.1.4</div>
<div class="t" style="left:1277.3px;top:919.54px;font-size:13px;font-family:'Liberation Sans';font-weight:400;color:#4a4acb;letter-spacing:0.000px;">base64enc</div>
<div class="t" style="left:1491.0px;top:919.28px;font-size:13.3px;font-family:'Liberation Sans';font-weight:400;color:#333;letter-spacing:0.000px;">Tools for base64 encoding</div>
<div class="t" style="left:2003.1px;top:919.87px;font-size:12.6px;font-family:'Liberation Sans';font-weight:400;color:#333;letter-spacing:0.000px;">0.1-3</div>
<div class="t" style="left:1277.3px;top:943.32px;font-size:13px;font-family:'Liberation Sans';font-weight:400;color:#4a4acb;letter-spacing:0.000px;">BH</div>
<div class="t" style="left:1491.0px;top:943.06px;font-size:13.3px;font-family:'Liberation Sans';font-weight:400;color:#333;letter-spacing:0.000px;">Boost C++ Header Files</div>
<div class="t" style="left:2003.1px;top:943.65px;font-size:12.6px;font-family:'Liberation Sans';font-weight:400;color:#333;letter-spacing:0.000px;">1.72.0-3</div>
<div class="t" style="left:1277.3px;top:967.10px;font-size:13px;font-family:'Liberation Sans';font-weight:400;color:#4a4acb;letter-spacing:0.000px;">Biobase</div>
<div class="t" style="left:1491.0px;top:966.84px;font-size:13.3px;font-family:'Liberation Sans';font-weight:400;color:#333;letter-spacing:0.000px;">Biobase: Base functions for Bioconductor</div>
<div class="t" style="left:2003.1px;top:967.43px;font-size:12.6px;font-family:'Liberation Sans';font-weight:400;color:#333;letter-spacing:0.000px;">2.38.0</div>
<div class="t" style="left:1277.3px;top:990.88px;font-size:13px;font-family:'Liberation Sans';font-weight:400;color:#4a4acb;letter-spacing:0.000px;">BiocGenerics</div>
<div class="t" style="left:1491.0px;top:990.62px;font-size:13.3px;font-family:'Liberation Sans';font-weight:400;color:#333;letter-spacing:0.000px;">S4 generic functions for Bioconductor</div>
<div class="t" style="left:2003.1px;top:991.21px;font-size:12.6px;font-family:'Liberation Sans';font-weight:400;color:#333;letter-spacing:0.000px;">0.24.0</div>
<div class="t" style="left:1277.3px;top:1014.66px;font-size:13px;font-family:'Liberation Sans';font-weight:400;color:#4a4acb;letter-spacing:0.000px;">BiocInstaller</div>
<div class="t" style="left:1491.0px;top:1014.40px;font-size:13.3px;font-family:'Liberation Sans';font-weight:400;color:#333;letter-spacing:0.000px;">Install/Update Bioconductor, CRAN, and github Packages</div>
<div class="t" style="left:2003.1px;top:1014.99px;font-size:12.6px;font-family:'Liberation Sans';font-weight:400;color:#333;letter-spacing:0.000px;">1.28.0</div>
<div class="t" style="left:1277.3px;top:1038.44px;font-size:13px;font-family:'Liberation Sans';font-weight:400;color:#4a4acb;letter-spacing:0.000px;">BiocManager</div>
<div class="t" style="left:1491.0px;top:1038.18px;font-size:13.3px;font-family:'Liberation Sans';font-weight:400;color:#333;letter-spacing:0.000px;">Access the Bioconductor Project Package Repository</div>
<div class="t" style="left:2003.1px;top:1038.77px;font-size:12.6px;font-family:'Liberation Sans';font-weight:400;color:#333;letter-spacing:0.000px;">1.30.10</div>
<div class="t" style="left:1277.3px;top:1062.22px;font-size:13px;font-family:'Liberation Sans';font-weight:400;color:#4a4acb;letter-spacing:0.000px;">BiocParallel</div>
<div class="t" style="left:1491.0px;top:1061.96px;font-size:13.3px;font-family:'Liberation Sans';font-weight:400;color:#333;letter-spacing:0.000px;">Bioconductor facilities for parallel evaluation</div>
<div class="t" style="left:2003.1px;top:1062.55px;font-size:12.6px;font-family:'Liberation Sans';font-weight:400;color:#333;letter-spacing:0.000px;">1.12.0</div>
<div class="t" style="left:1277.3px;top:1086.00px;font-size:13px;font-family:'Liberation Sans';font-weight:400;color:#4a4acb;letter-spacing:0.000px;">bit</div>
<div class="t" style="left:1491.0px;top:1085.74px;font-size:13.3px;font-family:'Liberation Sans';font-weight:400;color:#333;letter-spacing:0.000px;">A Class for Vectors of 1-Bit Booleans</div>
<div class="t" style="left:2003.1px;top:1086.33px;font-size:12.6px;font-family:'Liberation Sans';font-weight:400;color:#333;letter-spacing:0.000px;">1.1-14</div>
<div class="t" style="left:1277.3px;top:1109.78px;font-size:13px;font-family:'Liberation Sans';font-weight:400;color:#4a4acb;letter-spacing:0.000px;">bit64</div>
<div class="t" style="left:1491.0px;top:1109.52px;font-size:13.3px;font-family:'Liberation Sans';font-weight:400;color:#333;letter-spacing:0.000px;">A S3 Class for Vectors of 64bit Integers</div>
<div class="t" style="left:2003.1px;top:1110.11px;font-size:12.6px;font-family:'Liberation Sans';font-weight:400;color:#333;letter-spacing:0.000px;">0.9-7</div>
<div class="t" style="left:1277.3px;top:1133.56px;font-size:13px;font-family:'Liberation Sans';font-weight:400;color:#4a4acb;letter-spacing:0.000px;">bitops</div>
<div class="t" style="left:1491.0px;top:1133.30px;font-size:13.3px;font-family:'Liberation Sans';font-weight:400;color:#333;letter-spacing:0.000px;">Bitwise Operations</div>
<div class="t" style="left:2003.1px;top:1133.89px;font-size:12.6px;font-family:'Liberation Sans';font-weight:400;color:#333;letter-spacing:0.000px;">1.0-6</div>
<div class="t" style="left:1277.3px;top:1157.34px;font-size:13px;font-family:'Liberation Sans';font-weight:400;color:#4a4acb;letter-spacing:0.000px;">brew</div>
<div class="t" style="left:1491.0px;top:1157.08px;font-size:13.3px;font-family:'Liberation Sans';font-weight:400;color:#333;letter-spacing:0.000px;">Templating Framework for Report Generation</div>
<div class="t" style="left:2003.1px;top:1157.67px;font-size:12.6px;font-family:'Liberation Sans';font-weight:400;color:#333;letter-spacing:0.000px;">1.0-6</div>
<div class="t" style="left:1277.3px;top:1181.12px;font-size:13px;font-family:'Liberation Sans';font-weight:400;color:#4a4acb;letter-spacing:0.000px;">cellranger</div>
<div class="t" style="left:1491.0px;top:1180.86px;font-size:13.3px;font-family:'Liberation Sans';font-weight:400;color:#333;letter-spacing:0.000px;">Translate Spreadsheet Cell Ranges to Rows and Columns</div>
<div class="t" style="left:2003.1px;top:1181.45px;font-size:12.6px;font-family:'Liberation Sans';font-weight:400;color:#333;letter-spacing:0.000px;">1.1.0</div>
<div class="y" style="left:23px;top:31px;width:1200px;height:73px;"></div>
<div class="y" style="left:23px;top:104px;width:1200px;height:514px;"></div>
<div class="y" style="left:21px;top:674px;width:1200px;height:515px;"></div>
<div class="y" style="left:1231px;top:31px;width:950px;height:568px;"></div>
<div class="y" style="left:1231px;top:614px;width:950px;height:610px;"></div>
<svg class="a" style="left:315.5px;top:12.5px" width="84" height="84" viewBox="-42 -42 84 84"><circle r="39.8" fill="none" stroke="#999" stroke-width="2"/><circle r="27" fill="#333"/><circle cy="0.6" r="13.5" fill="#fff"/><path d="M-7.4 0.5 L-0.6 -6 L-0.6 -1.6 L6.3 -1.6 L6.3 2.8 L-0.6 2.8 L-0.6 6.9 Z" fill="#333"/></svg>
<svg class="a" style="left:542px;top:43px" width="84" height="84" viewBox="-42 -42 84 84"><circle r="39.8" fill="none" stroke="#999" stroke-width="2"/><circle r="27" fill="#333"/><circle cy="0.6" r="13.5" fill="#fff"/><path d="M-7.4 0.5 L-0.6 -6 L-0.6 -1.6 L6.3 -1.6 L6.3 2.8 L-0.6 2.8 L-0.6 6.9 Z" fill="#333"/></svg>
<svg class="a" style="left:493.5px;top:293px" width="84" height="84" viewBox="-42 -42 84 84"><circle r="39.8" fill="none" stroke="#999" stroke-width="2"/><circle r="27" fill="#333"/><g fill="#fff"><circle cx="0" cy="-7.8" r="3.4" fill="none" stroke="#fff" stroke-width="3.2"/><rect x="-5" y="-3" width="10.5" height="4" rx="0.5"/><rect x="-1.9" y="-2" width="3.9" height="15"/><path d="M-11 6 A 11.8 11.8 0 0 0 11 6" fill="none" stroke="#fff" stroke-width="3.6"/><path d="M-14.8 6.2 L-10 0.8 L-7.6 6.8 Z"/><path d="M14.8 6.2 L10 0.8 L7.6 6.8 Z"/></g></svg>
<svg class="a" style="left:1560.5px;top:301.5px" width="84" height="84" viewBox="-42 -42 84 84"><circle r="39.8" fill="none" stroke="#999" stroke-width="2"/><circle r="27" fill="#333"/><g fill="#fff"><circle cx="0" cy="-7.8" r="3.4" fill="none" stroke="#fff" stroke-width="3.2"/><rect x="-5" y="-3" width="10.5" height="4" rx="0.5"/><rect x="-1.9" y="-2" width="3.9" height="15"/><path d="M-11 6 A 11.8 11.8 0 0 0 11 6" fill="none" stroke="#fff" stroke-width="3.6"/><path d="M-14.8 6.2 L-10 0.8 L-7.6 6.8 Z"/><path d="M14.8 6.2 L10 0.8 L7.6 6.8 Z"/></g></svg>
<svg class="a" style="left:505px;top:1001.5px" width="84" height="84" viewBox="-42 -42 84 84"><circle r="39.8" fill="none" stroke="#999" stroke-width="2"/><circle r="27" fill="#333"/><g fill="#fff"><circle cx="0" cy="-7.8" r="3.4" fill="none" stroke="#fff" stroke-width="3.2"/><rect x="-5" y="-3" width="10.5" height="4" rx="0.5"/><rect x="-1.9" y="-2" width="3.9" height="15"/><path d="M-11 6 A 11.8 11.8 0 0 0 11 6" fill="none" stroke="#fff" stroke-width="3.6"/><path d="M-14.8 6.2 L-10 0.8 L-7.6 6.8 Z"/><path d="M14.8 6.2 L10 0.8 L7.6 6.8 Z"/></g></svg>
<svg class="a" style="left:1862.5px;top:849px" width="84" height="84" viewBox="-42 -42 84 84"><circle r="39.8" fill="none" stroke="#999" stroke-width="2"/><circle r="27" fill="#333"/><g fill="#fff"><circle cx="0" cy="-7.8" r="3.4" fill="none" stroke="#fff" stroke-width="3.2"/><rect x="-5" y="-3" width="10.5" height="4" rx="0.5"/><rect x="-1.9" y="-2" width="3.9" height="15"/><path d="M-11 6 A 11.8 11.8 0 0 0 11 6" fill="none" stroke="#fff" stroke-width="3.6"/><path d="M-14.8 6.2 L-10 0.8 L-7.6 6.8 Z"/><path d="M14.8 6.2 L10 0.8 L7.6 6.8 Z"/></g></svg>
</body></html>
